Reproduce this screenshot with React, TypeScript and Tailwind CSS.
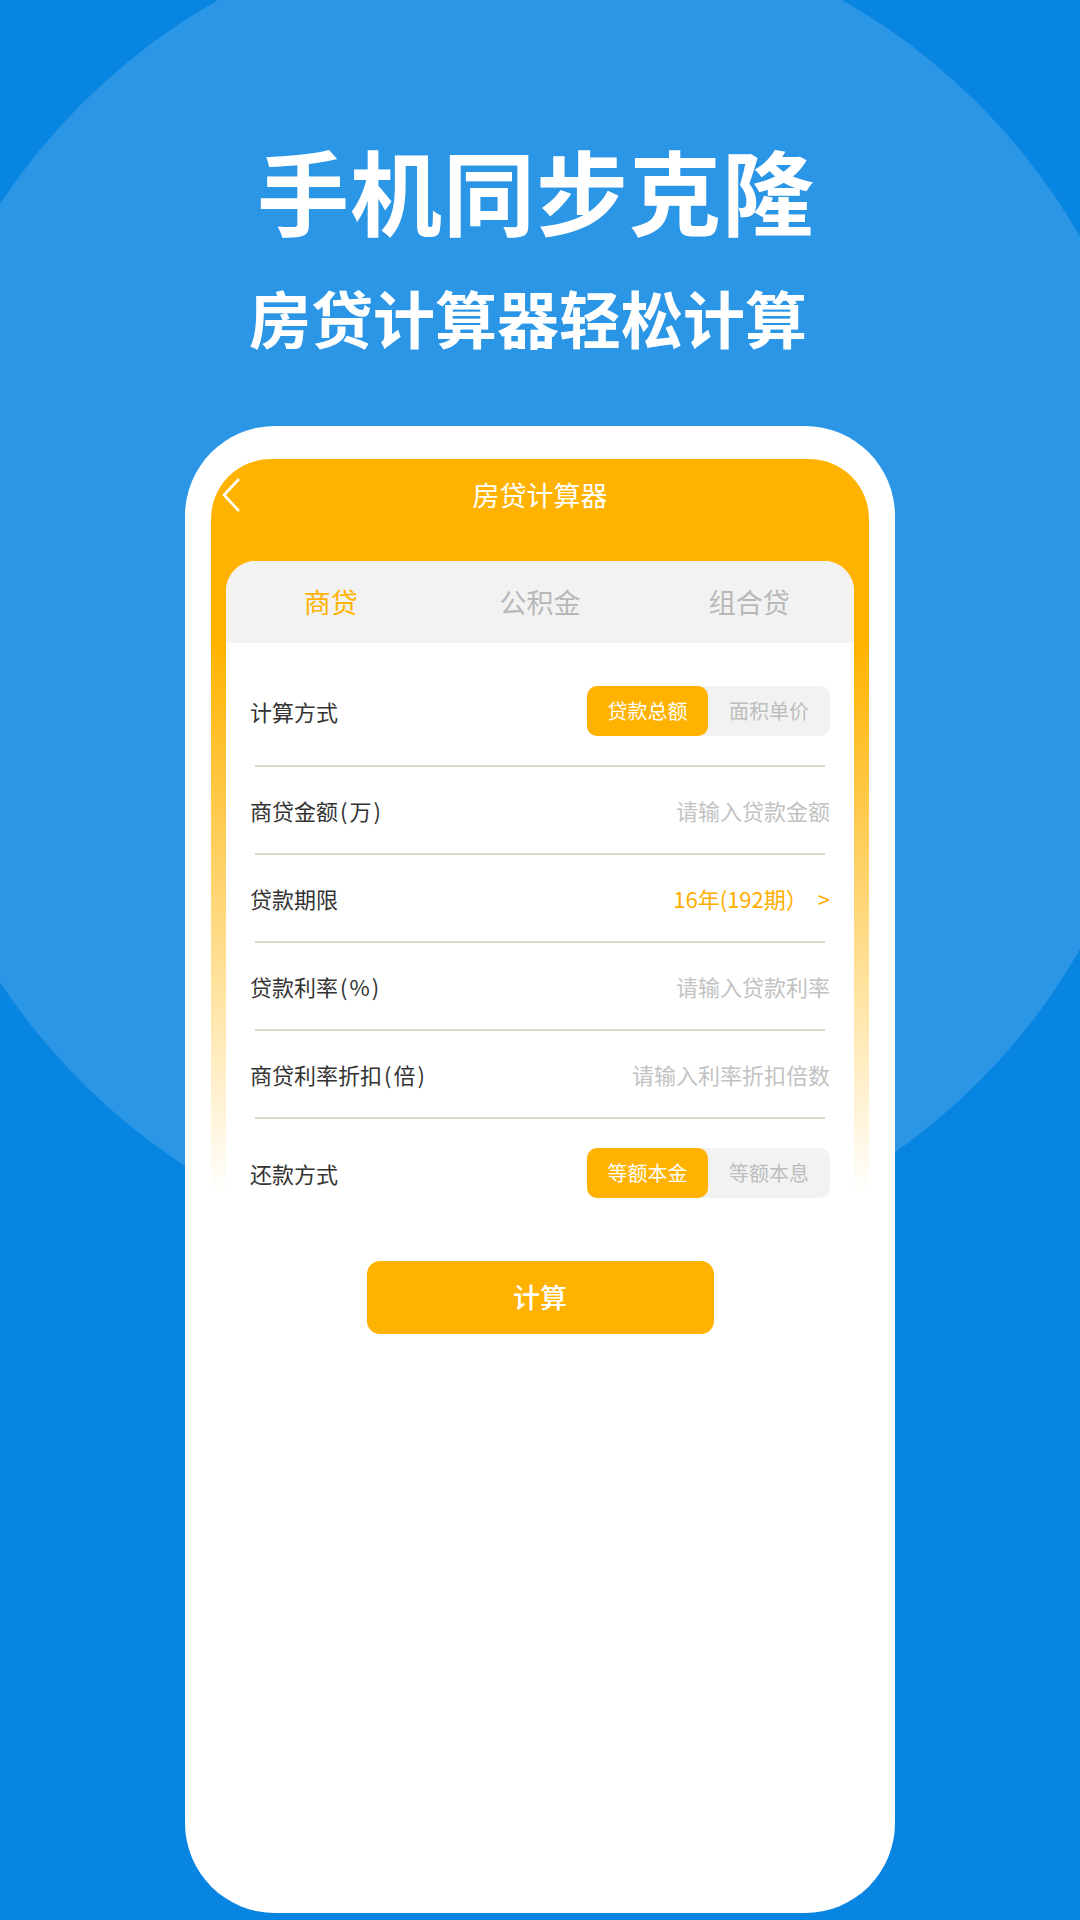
const font = { fontFamily: '"Noto Sans CJK SC", "Noto Sans", sans-serif' };

type Row =
  | { label: string; kind: 'toggle'; options: [string, string] }
  | { label: string; kind: 'input'; placeholder: string }
  | { label: string; kind: 'value'; value: string };

const rows: Row[] = [
  { label: '计算方式', kind: 'toggle', options: ['贷款总额', '面积单价'] },
  { label: '商贷金额(万)', kind: 'input', placeholder: '请输入贷款金额' },
  { label: '贷款期限', kind: 'value', value: '16年(192期）' },
  { label: '贷款利率(%)', kind: 'input', placeholder: '请输入贷款利率' },
  { label: '商贷利率折扣(倍)', kind: 'input', placeholder: '请输入利率折扣倍数' },
  { label: '还款方式', kind: 'toggle', options: ['等额本金', '等额本息'] },
];

// the app draws its half-width brackets a little looser than the font does
function Label({ text }: { text: string }) {
  const parts = text.split(/([()])/);
  return (
    <span className="text-[22px] text-[#333333]">
      {parts.map((p, i) =>
        p === '(' || p === ')' ? (
          <span key={i} className="px-[2px]">
            {p}
          </span>
        ) : (
          p
        )
      )}
    </span>
  );
}

function Toggle({ options }: { options: [string, string] }) {
  return (
    <div className="flex h-[50px] w-[243px] rounded-[10px] bg-[#f2f2f2] text-[20px]">
      <div className="flex w-[121px] items-center justify-center rounded-[10px] bg-[#ffb300] text-white">
        {options[0]}
      </div>
      <div className="flex flex-1 items-center justify-center text-[#bdbdbd]">{options[1]}</div>
    </div>
  );
}

function FormRow({ row, height }: { row: Row; height: string }) {
  return (
    <div className={`flex items-center justify-between px-[24px] ${height}`}>
      <Label text={row.label} />
      {row.kind === 'toggle' && <Toggle options={row.options} />}
      {row.kind === 'input' && <span className="text-[22px] text-[#c2c2c2]">{row.placeholder}</span>}
      {row.kind === 'value' && (
        <span className="flex items-center gap-[10px] text-[22px] text-[#ffae00]">
          <span>{row.value}</span>
          <span>&gt;</span>
        </span>
      )}
    </div>
  );
}

const Divider = ({ className = '' }: { className?: string }) => (
  <div className={`mx-[29px] h-[2px] bg-[#d9d9cc] ${className}`} />
);

export default function App() {
  return (
    <div className="relative h-[1920px] w-[1080px] overflow-hidden bg-[#0785e0]" style={font}>
      {/* big light ellipse behind the title */}
      <div className="absolute left-[-104px] top-[-82px] h-[1350px] w-[1268px] rounded-full bg-[#2b96e6]" />

      <div className="relative flex flex-col items-center">
        <h1 className="mr-[8px] pt-[143px] text-[92px] font-bold leading-none tracking-[1px] text-white">手机同步克隆</h1>
        <h2 className="mr-[24px] mt-[51px] text-[62px] font-bold leading-none text-white">房贷计算器轻松计算</h2>

        <div className="mt-[78px] flex h-[1487px] w-[710px] flex-col items-center rounded-[90px] bg-white px-[25px] pt-[33px]">
          <div className="w-[658px] rounded-t-[60px] bg-[linear-gradient(180deg,#ffb300_0px,#ffb300_185px,#ffffff_736px)] px-[15px]">
            <div className="grid h-[72px] grid-cols-[1fr_auto_1fr] items-center">
              <svg width="22" height="36" viewBox="0 0 22 36" className="ml-[-6px]">
                <path d="M19 2 L4 18 L19 34" fill="none" stroke="#fff" strokeWidth="2.6" />
              </svg>
              <span className="text-[27px] text-white">房贷计算器</span>
              <span />
            </div>

            <div className="mt-[30px] overflow-hidden rounded-t-[30px] bg-white">
              <div className="grid h-[82px] grid-cols-3 items-center bg-[#f2f2f2] text-center text-[27px]">
                <span className="text-[#ffb300]">商贷</span>
                <span className="text-[#b8b8b8]">公积金</span>
                <span className="text-[#b8b8b8]">组合贷</span>
              </div>

              <div className="pt-[25px]">
                <FormRow row={rows[0]} height="h-[86px]" />
                <Divider className="mt-[11px]" />
                <FormRow row={rows[1]} height="h-[86px]" />
                <Divider />
                <FormRow row={rows[2]} height="h-[86px]" />
                <Divider />
                <FormRow row={rows[3]} height="h-[86px]" />
                <Divider />
                <FormRow row={rows[4]} height="h-[86px]" />
                <Divider />
                <FormRow row={rows[5]} height="h-[108px]" />
              </div>
            </div>
          </div>

          <button className="mt-[34px] flex h-[73px] w-[347px] items-center justify-center rounded-[13px] bg-[#ffb300] text-[27px] font-medium text-white">
            计算
          </button>
        </div>
      </div>
    </div>
  );
}
